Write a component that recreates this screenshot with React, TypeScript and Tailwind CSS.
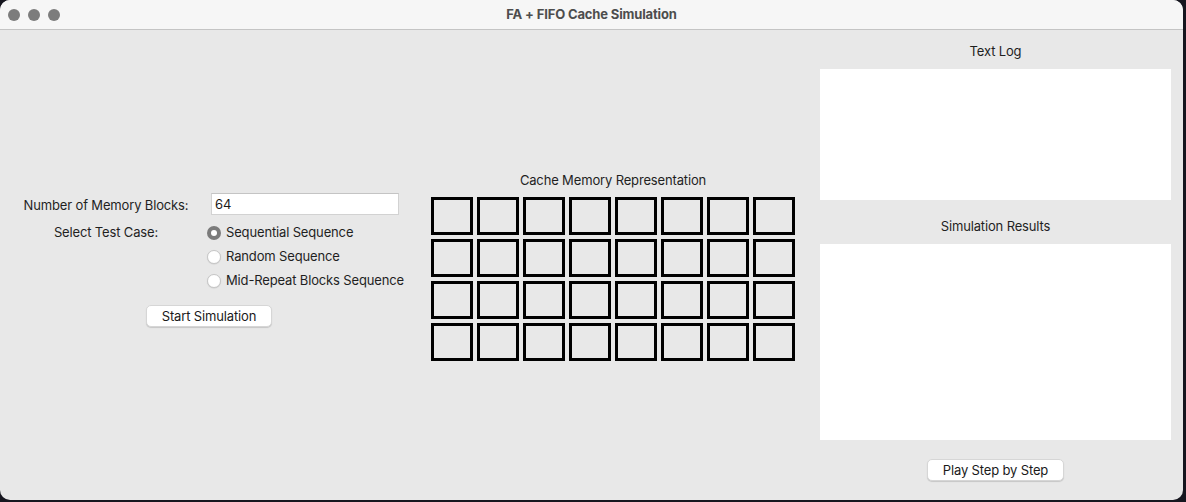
import React from "react";

const font = { fontFamily: "Inter, 'Noto Sans', sans-serif", letterSpacing: "-0.15px" };

function MacButton({ label, className }: { label: string; className: string }) {
  return (
    <button
      className={`h-[22px] rounded-[5px] bg-white text-[13px] leading-none text-[#1a1a1a] border border-[#d6d6d6] shadow-[0_1px_1px_rgba(0,0,0,0.15)] ${className}`}
    >
      {label}
    </button>
  );
}

function Radio({ label, checked }: { label: string; checked?: boolean }) {
  return (
    <div className="flex h-[24px] items-center">
      {checked ? (
        <span className="flex h-[14px] w-[14px] items-center justify-center rounded-full bg-[#7b7b7b]">
          <span className="h-[6px] w-[6px] rounded-full bg-white" />
        </span>
      ) : (
        <span className="h-[14px] w-[14px] rounded-full border border-[#c6c6c6] bg-white shadow-[0_0.5px_1px_rgba(0,0,0,0.12)]" />
      )}
      <span className="ml-[5px] text-[13px] text-[#1f1f1f]">{label}</span>
    </div>
  );
}

export default function App() {
  const cells = Array.from({ length: 32 }, (_, i) => i);

  return (
    <div className="h-[502px] w-[1186px] bg-[#16161f]" style={font}>
      <div className="flex h-[500px] w-[1183px] flex-col overflow-hidden rounded-[10px] bg-[#e8e8e8]">
        {/* title bar */}
        <div className="relative flex h-[30px] shrink-0 items-center justify-center border-b border-[#c4c4c4] bg-[#f6f6f6]">
          <div className="absolute left-[8px] top-[9px] flex gap-[8px]">
            <span className="h-[12px] w-[12px] rounded-full bg-[#7c7c7c]" />
            <span className="h-[12px] w-[12px] rounded-full bg-[#7c7c7c]" />
            <span className="h-[12px] w-[12px] rounded-full bg-[#7c7c7c]" />
          </div>
          <span className="text-[13px] font-bold text-[#4d4d4d]">FA + FIFO Cache Simulation</span>
        </div>

        {/* body */}
        <div className="flex flex-1">
          {/* left panel */}
          <div className="flex w-[420px] flex-col pt-[163px]">
            <div className="flex h-[22px] items-center">
              <span className="ml-[12px] w-[188px] pt-[4px] text-center text-[13px] text-[#1f1f1f]">
                Number of Memory Blocks:
              </span>
              <div className="ml-[11px] flex h-[22px] w-[188px] items-center border border-[#d2d2d2] border-t-[#c4c4c4] bg-white pl-[3px] pt-[1px] text-[13px] text-[#1a1a1a]">
                64
              </div>
            </div>
            <div className="mt-[6px] flex">
              <div className="ml-[12px] flex h-[24px] w-[188px] items-center justify-center text-[13px] text-[#1f1f1f]">
                Select Test Case:
              </div>
              <div className="ml-[7px] flex flex-col">
                <Radio label="Sequential Sequence" checked />
                <Radio label="Random Sequence" />
                <Radio label="Mid-Repeat Blocks Sequence" />
              </div>
            </div>
            <div className="mt-[12px] flex justify-center">
              <MacButton label="Start Simulation" className="ml-[-2px] w-[126px]" />
            </div>
          </div>

          {/* middle panel */}
          <div className="flex w-[386px] flex-col items-center pt-[142px]">
            <div className="h-[16px] text-[13px] leading-[16px] text-[#1f1f1f]">Cache Memory Representation</div>
            <div className="mt-[9px] grid grid-cols-8 gap-[4px]">
              {cells.map((c) => (
                <div key={c} className="h-[38px] w-[42px] border-[3px] border-black" />
              ))}
            </div>
          </div>

          {/* right panel */}
          <div className="flex flex-1 flex-col pl-[14px] pt-[13px]">
            <div className="w-[351px] text-center text-[13px] leading-[16px] text-[#1f1f1f]">Text Log</div>
            <div className="mt-[10px] h-[131px] w-[351px] bg-white" />
            <div className="mt-[18px] w-[351px] text-center text-[13px] leading-[16px] text-[#1f1f1f]">
              Simulation Results
            </div>
            <div className="mt-[10px] h-[196px] w-[351px] bg-white" />
            <div className="mt-[19px] flex w-[351px] justify-center">
              <MacButton label="Play Step by Step" className="w-[137px]" />
            </div>
          </div>
        </div>
      </div>
    </div>
  );
}
